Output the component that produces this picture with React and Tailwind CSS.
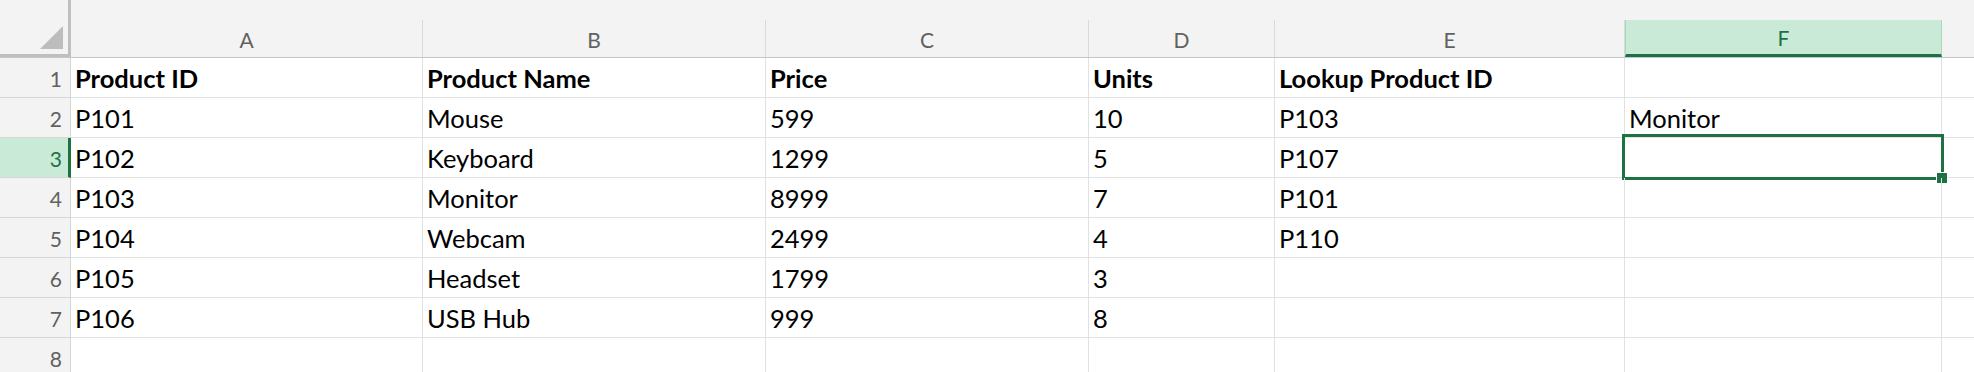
import React from "react";

const COLS = "grid grid-cols-[71px_352px_343px_323px_186px_350px_317px_1fr]";

const data = [
  { n: 1, bold: true, c: ["Product ID", "Product Name", "Price", "Units", "Lookup Product ID", ""] },
  { n: 2, c: ["P101", "Mouse", "599", "10", "P103", "Monitor"] },
  { n: 3, c: ["P102", "Keyboard", "1299", "5", "P107", ""] },
  { n: 4, c: ["P103", "Monitor", "8999", "7", "P101", ""] },
  { n: 5, c: ["P104", "Webcam", "2499", "4", "P110", ""] },
  { n: 6, c: ["P105", "Headset", "1799", "3", "", ""] },
  { n: 7, c: ["P106", "USB Hub", "999", "8", "", ""] },
  { n: 8, c: ["", "", "", "", "", ""] },
];

const letters = ["A", "B", "C", "D", "E"];

function Header() {
  return (
    <div className={`${COLS} h-[58px] bg-[#f3f3f3] border-b border-[#c6c6c6]`}>
      <div className="flex items-end justify-end border-r-[3px] border-b-[3px] border-[#bfbfbf] pr-[5px] pb-[5px]">
        <svg width="23" height="23" viewBox="0 0 23 23">
          <path d="M23 0 L23 23 L0 23 Z" fill="#bdbdbd" />
        </svg>
      </div>
      {letters.map((l) => (
        <div
          key={l}
          className="self-end h-[37px] flex items-center justify-center pt-[2px] border-r border-[#dadada] text-[21px] text-[#616161]"
        >
          {l}
        </div>
      ))}
      <div className="self-end h-[37px] flex items-center justify-center pt-[2px] bg-[#c9ead7] border-l border-l-[#a9d8bc] border-r border-r-[#a9d8bc] border-b-[3px] border-b-[#1e7145] text-[21px] text-[#1e7145]">
        F
      </div>
      <div className="self-end h-[37px]" />
    </div>
  );
}

function Row({ row }) {
  const active = row.n === 3;
  return (
    <div className={`${COLS} h-[40px]`}>
      {active ? (
        <div className="flex items-center justify-end pt-[2px] pr-[6px] bg-[#c9ead7] border-b border-b-[#d6d6d6] border-r-[3px] border-r-[#1e7145] text-[21px] text-[#1e7145]">
          {row.n}
        </div>
      ) : (
        <div className="flex items-center justify-end pt-[2px] pr-[8px] bg-[#f3f3f3] border-b border-r border-[#d6d6d6] text-[21px] text-[#616161]">
          {row.n}
        </div>
      )}
      {row.c.map((v, i) => (
        <div
          key={i}
          className={`relative flex items-center pt-[2px] pl-[4px] border-r border-b border-[#e1e1e1] text-[25.5px] leading-[1.2] text-black whitespace-nowrap ${row.bold ? "font-bold" : "font-normal"}`}
        >
          {v}
          {active && i === 5 && (
            <div className="absolute -left-[3px] -right-[3px] -top-[4px] -bottom-[3px] border-[3px] border-[#1e7145]">
              <div className="absolute -right-[7px] -bottom-[7px] w-[12px] h-[12px] bg-[#1e7145] border border-white" />
            </div>
          )}
        </div>
      ))}
      <div className="border-b border-[#e1e1e1]" />
    </div>
  );
}

export default function App() {
  return (
    <div className="w-[1974px] h-[372px] overflow-hidden bg-white font-['Lato',sans-serif]">
      <Header />
      {data.map((r) => (
        <Row key={r.n} row={r} />
      ))}
    </div>
  );
}
